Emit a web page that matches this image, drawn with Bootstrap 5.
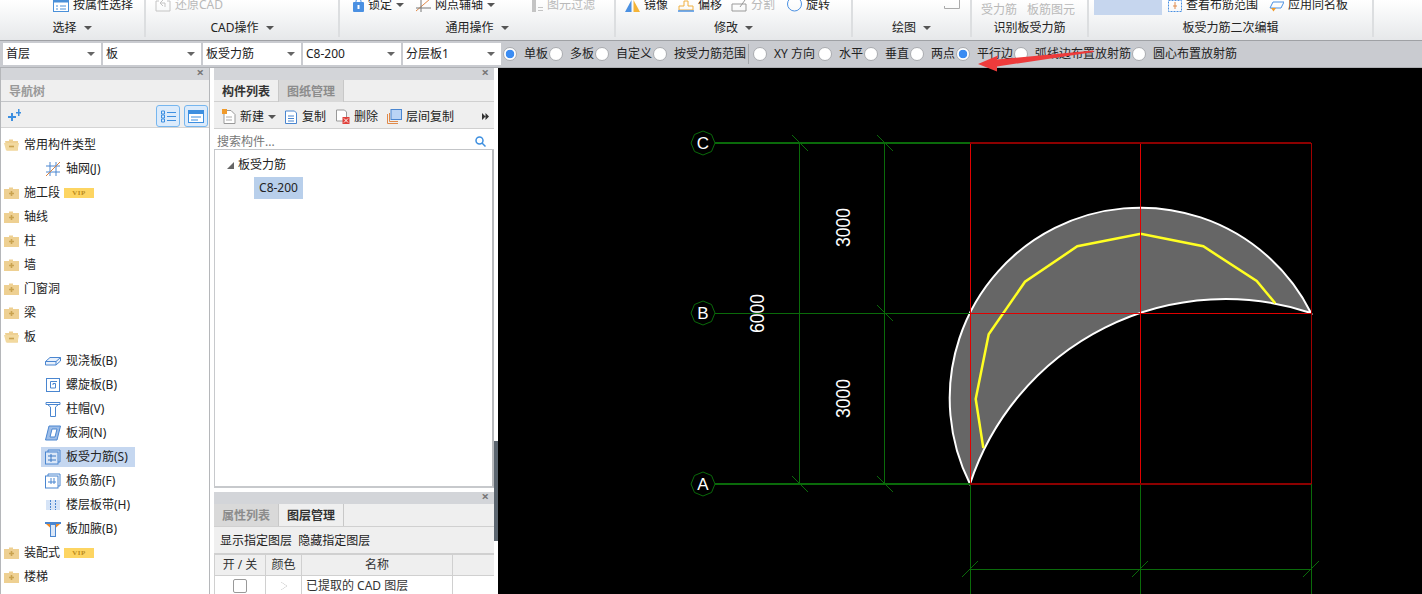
<!DOCTYPE html>
<html lang="zh">
<head>
<meta charset="utf-8">
<title>板受力筋</title>
<link href="https://cdn.jsdelivr.net/npm/bootstrap@5.3.0/dist/css/bootstrap.min.css" rel="stylesheet">
<style>
html,body{height:594px;overflow:hidden}
body{font-family:"Noto Sans","Noto Sans CJK SC",sans-serif;font-size:12px;line-height:18px;color:#222;background:#fff;position:relative}
svg{display:block;flex:none}
.ribbon{height:40px;background:linear-gradient(#fff,#e6e8ea);border-bottom:0}
.rgroup{height:37px;border-right:2px solid #dcdee0;flex:none}
.rtop{height:18px;overflow:hidden;white-space:nowrap}
.ritem{display:flex;align-items:center;gap:4px;margin-top:-4px;height:18px}
.rlabel{height:20px;line-height:20px;text-align:center;color:#222}
.off{color:#b9b9b9}
.caret-s{display:inline-block;width:0;height:0;border-left:4px solid transparent;border-right:4px solid transparent;border-top:4px solid #555;vertical-align:2px}
.g1{width:146px;padding-left:53px}.g2{width:194px;padding-left:9px}.g3{width:276px;padding-left:13px}.g4{width:237px;padding-left:9px}.g5{width:119px}.g6{width:117px}.g7{width:285px}
.optbar{height:28px;background:#c9cbd0;border-top:1px solid #9fa1a5;border-bottom:1px solid #aeb0b4;padding:2px 0 0 3px}
.combo{position:relative;width:98px;height:22px;margin-right:2px;flex:none}
.combo .form-select{height:22px;min-height:0;padding:0 14px 0 3px;border:0;border-radius:0;font-size:12px;line-height:22px;background-image:none;color:#222;font-family:inherit}
.combo::after{content:"";position:absolute;right:6px;top:9px;border-left:4px solid transparent;border-right:4px solid transparent;border-top:4px solid #666}
.optbar .form-check-input{width:14px;height:14px;margin:0 7px 0 0;flex:none;background-color:#fff;border:1px solid #a9abaf;box-shadow:none}
.optbar .form-check-input:checked{background-color:#fff;border-color:#a9abaf;background-image:radial-gradient(circle,#3b8cf2 0 4px,transparent 4.6px)}
.optlab{margin-right:1px;white-space:nowrap;color:#222}
.optlab.wide{margin-right:3px}
.optsep{width:1px;height:20px;background:#a5a7ab;margin:0 4px 0 1px}
.workspace{height:526px}
.lpane{width:210px;flex:none;background:#fff;border-left:1px solid #b5b7ba;border-right:1px solid #b5b7ba}
.mpane{width:280px;flex:none;margin-left:4px;background:#fff}
.pbar{height:12px;background:#d3d5d9;position:relative;flex:none}
.pbar i{position:absolute;right:5px;top:-4px;font-style:normal;font-size:13px;line-height:16px;color:#777;font-weight:700}
.phead{height:22px;line-height:23px;background:#efefef;border-bottom:1px solid #c3c5c8;padding-left:8px;color:#999;font-weight:600;flex:none}
.ltools{height:26px;background:#efefef;border-bottom:1px solid #d4d4d4;padding:3px 1px 0 7px;flex:none}
.vbtn{width:24px;height:22px;border:1px solid #76b6ef;border-radius:3px;background:#dcebfb;margin-left:4px;display:flex;align-items:center;justify-content:center}
.ntree{padding-top:5px;margin:0;flex:1;overflow:hidden}
.ntree li{height:24px;display:flex;align-items:center;padding-left:3px;white-space:nowrap}
.ntree li .fname{margin-left:5px}
.ntree li.kid{padding-left:44px}
.ntree li.kid svg{margin-right:5px}
.ntree li.kid span{padding:1px 0}
.ntree li.sel{position:relative}
.ntree li.sel::before{content:"";position:absolute;left:40px;width:94px;top:2px;height:20px;background:#c5d7f0;z-index:0}
.ntree li.sel>*{position:relative;z-index:1}
.viptag{width:30px;height:10px;margin-left:4px;background:#fdd562;color:#b98a1c;font:700 7px/10px "Liberation Serif",serif;text-align:center;letter-spacing:.5px}
.tabrow{height:22px;background:#efefef;border-bottom:1px solid #d0d0d0;flex:none}
.ptab{width:65px;height:22px;line-height:24px;text-align:center;flex:none;border-right:1px solid #c8c8c8;font-weight:700;color:#333}
.ptab.idle{background:#d9d9d9;color:#8c8c8c;font-weight:600}
.mtools{height:27px;background:#efefef;border-bottom:1px solid #d0d0d0;white-space:nowrap;flex:none;padding-top:3px}
.mtools span{display:block}
.searchbox{height:21px;background:#fff;border-bottom:1px solid #c3c5c8;padding:5px 8px 0 3px;color:#777;flex:none}
.ctree{height:338px;border-bottom:2px solid #c7c9cc;border-left:1px solid #c7c9cc;border-right:2px solid #b8babd;flex:none}
.ctree .rowa{height:25px;padding:5px 0 0 12px;gap:4px}
.ctree .rowb{margin:2px 0 0 39px;width:49px;height:22px;line-height:22px;background:#b8cfeb;text-align:center}
.pgap{height:4px;flex:none}
.layertools{height:27px;line-height:27px;background:#efefef;border-bottom:1px solid #d0d0d0;padding-left:6px;flex:none}
.layertbl{table-layout:fixed;width:280px;margin:0;font-size:12px;--bs-table-bg:transparent}
.layertbl th,.layertbl td{padding:0;text-align:center;font-weight:400;border:1px solid #d0d0d0;height:21px;line-height:20px;color:#333}
.layertbl th{background:#efefef}
.layertbl .cbx{width:14px;height:14px;margin:3px 0 0;border:1px solid #999;border-radius:2px}
.layertbl td.lname{text-align:left;padding-left:4px}
.tri-r{width:0;height:0;display:inline-block;border-left:6px solid #fff;border-top:4px solid transparent;border-bottom:4px solid transparent;filter:drop-shadow(0 0 .6px #666)}
.gutter{width:4px;flex:none;background:#fff}
.gutter div{height:100px;margin-top:373px;background:#5c6670}
.cadwrap{flex:1;background:#000}
.cadtxt{font-family:"Liberation Sans",sans-serif;fill:#fff}
.arrowover{position:absolute;left:970px;top:45px}
</style>
</head>
<body>
<svg width="0" height="0" class="position-absolute">
<defs>
<symbol id="fc" viewBox="0 0 15 12"><path d="M0 2h5V0.5h4V2h6v10H0z" fill="#eed092"/><path d="M5 6.5h5M7.5 4v5" stroke="#c9a24f" stroke-width="1.6"/></symbol>
<symbol id="fo" viewBox="0 0 15 12"><path d="M1 2h4V0.5h4V2h5v9.5H3z" fill="#eed092"/><path d="M0 4h15l-1.5 7.5H2z" fill="#f2d99f"/><path d="M5 7.5h5" stroke="#c9a24f" stroke-width="1.6"/></symbol>
</defs>
</svg>

<div class="ribbon d-flex">
  <div class="rgroup g1">
    <div class="rtop d-flex"><div class="ritem"><svg width="16" height="13" viewBox="0 0 16 13"><rect x=".5" y=".5" width="15" height="12" fill="#fff" stroke="#4a90d9"/><rect x=".5" y=".5" width="15" height="3" fill="#4a90d9"/><path d="M3 7h2M7 7h6M3 10h2M7 10h6" stroke="#4a90d9"/></svg><span>按属性选择</span></div></div>
    <div class="rlabel" style="margin-left:-53px">选择 <span class="caret-s ms-1"></span></div>
  </div>
  <div class="rgroup g2">
    <div class="rtop d-flex"><div class="ritem off"><svg width="16" height="13" viewBox="0 0 16 13" fill="none" stroke="#c4c4c4"><path d="M1 12V2h3M12 2h3v10H1"/><path d="M8 1L5 4l3 3M5 4h5v4"/></svg><span>还原CAD</span></div></div>
    <div class="rlabel" style="margin-left:-9px">CAD操作 <span class="caret-s ms-1"></span></div>
  </div>
  <div class="rgroup g3">
    <div class="rtop d-flex">
      <div class="ritem"><svg width="11" height="13" viewBox="0 0 11 13"><rect y="3" width="11" height="10" rx="1" fill="#4a90e2"/><path d="M3 4V2a2.500 2 0 0 1 5 0v2" fill="none" stroke="#4a90e2"/><rect x="4.500" y="6" width="2" height="4" fill="#fff"/></svg><span>锁定</span><span class="caret-s"></span></div>
      <div class="ritem" style="margin-left:12px"><svg width="15" height="13" viewBox="0 0 15 13" fill="none"><path d="M0 12L14 0" stroke="#e08a4a"/><path d="M5 0v13M0 9h15" stroke="#777"/></svg><span>网点辅轴</span><span class="caret-s"></span></div>
      <div class="ritem off" style="margin-left:37px"><svg width="11" height="13" viewBox="0 0 11 13" fill="#c4c4c4"><rect width="4" height="13"/><path d="M6 8h5v1H6zM6 11h5v1H6z"/></svg><span>图元过滤</span></div>
    </div>
    <div class="rlabel" style="margin-left:-13px">通用操作 <span class="caret-s ms-1"></span></div>
  </div>
  <div class="rgroup g4">
    <div class="rtop d-flex">
      <div class="ritem"><svg width="15" height="13" viewBox="0 0 15 13"><path d="M0 13L6.500 1V13z" fill="#4a90e2"/><path d="M8.500 1L15 13H8.500z" fill="#f5b437"/></svg><span>镜像</span></div>
      <div class="ritem" style="margin-left:10px"><svg width="16" height="13" viewBox="0 0 16 13" fill="none"><path d="M1 11V7h5V2h4v5h5v4z" stroke="#f0b040"/><path d="M0 12h16" stroke="#4a90e2" stroke-width="1.500"/></svg><span>偏移</span></div>
      <div class="ritem off" style="margin-left:9px"><svg width="16" height="13" viewBox="0 0 16 13" fill="none" stroke="#999"><path d="M1 5h14v7H1zM9 8l5-7"/></svg><span>分割</span></div>
      <div class="ritem" style="margin-left:12px"><svg width="15" height="13" viewBox="0 0 15 13" fill="none"><circle cx="7.500" cy="5" r="7" stroke="#4a90e2"/></svg><span>旋转</span></div>
    </div>
    <div class="rlabel" style="margin-left:-9px">修改 <span class="caret-s ms-1"></span></div>
  </div>
  <div class="rgroup g5">
    <div class="rtop position-relative"><svg class="position-absolute" style="left:91px;top:0" width="16" height="9" viewBox="0 0 16 9" fill="none" stroke="#aaa"><path d="M.5 8.500h15M15.500 0v8.500M.5 6v2.500"/></svg></div>
    <div class="rlabel">绘图 <span class="caret-s ms-1"></span></div>
  </div>
  <div class="rgroup g6">
    <div class="rtop d-flex off" style="padding-left:9px;gap:10px;line-height:18px;padding-top:1px"><span>受力筋</span><span>板筋图元</span></div>
    <div class="rlabel">识别板受力筋</div>
  </div>
  <div class="rgroup g7">
    <div class="rtop d-flex">
      <div style="width:68px;height:15px;background:#c6d6ee;margin-left:5px"></div>
      <div class="ritem" style="margin-left:6px"><svg width="14" height="13" viewBox="0 0 14 13" fill="none"><rect x=".5" y="1.500" width="13" height="11" stroke="#4a90e2" stroke-dasharray="2 1"/><path d="M7 3v7M5 7h4" stroke="#e08a4a"/></svg><span>查看布筋范围</span></div>
      <div class="ritem" style="margin-left:11px"><svg width="15" height="13" viewBox="0 0 15 13" fill="none"><path d="M4 3h11l-3 6H1z" stroke="#4a90e2"/><path d="M2 9h5l-2.500 3.500z" fill="#f09a2a"/></svg><span>应用同名板</span></div>
    </div>
    <div class="rlabel">板受力筋二次编辑</div>
  </div>
</div>

<div class="optbar d-flex">
  <div class="combo"><select class="form-select"><option>首层</option></select></div>
  <div class="combo"><select class="form-select"><option>板</option></select></div>
  <div class="combo"><select class="form-select"><option>板受力筋</option></select></div>
  <div class="combo"><select class="form-select"><option>C8-200</option></select></div>
  <div class="combo me-0"><select class="form-select"><option>分层板1</option></select></div>
  <div class="d-flex align-items-center" style="height:22px;padding-left:2px">
    <input class="form-check-input" type="radio" name="a" checked><span class="optlab">单板</span>
    <input class="form-check-input" type="radio" name="a"><span class="optlab">多板</span>
    <input class="form-check-input" type="radio" name="a"><span class="optlab">自定义</span>
    <input class="form-check-input" type="radio" name="a"><span class="optlab">按受力筋范围</span>
    <span class="optsep"></span>
    <input class="form-check-input" type="radio" name="b"><span class="optlab wide">XY 方向</span>
    <input class="form-check-input" type="radio" name="b"><span class="optlab">水平</span>
    <input class="form-check-input" type="radio" name="b"><span class="optlab">垂直</span>
    <input class="form-check-input" type="radio" name="b"><span class="optlab">两点</span>
    <input class="form-check-input" type="radio" name="b" checked><span class="optlab">平行边</span>
    <input class="form-check-input" type="radio" name="b"><span class="optlab">弧线边布置放射筋</span>
    <input class="form-check-input" type="radio" name="b"><span class="optlab">圆心布置放射筋</span>
  </div>
</div>

<div class="workspace d-flex">
  <aside class="lpane d-flex flex-column">
    <div class="pbar"><i>×</i></div>
    <div class="phead">导航树</div>
    <div class="ltools d-flex">
      <svg class="mt-1" width="13" height="12" viewBox="0 0 13 12" fill="#3d8fe0"><path d="M0 7h3V4h2v3h3v2H5v3H3V9H0zM8 3h2V0h1.500v3H13v1.500h-1.500V7H10V4.500H8z"/></svg>
      <div class="vbtn" style="margin-left:135px"><svg width="15" height="13" viewBox="0 0 15 13" fill="none" stroke="#3d8fe0"><path d="M.5 1h3v3h-3zM.5 5h3v3h-3zM.5 9h3v3h-3zM6 2.500h9M6 6.500h9M6 10.500h9"/></svg></div>
      <div class="vbtn"><svg width="16" height="13" viewBox="0 0 16 13"><rect x=".5" y=".5" width="15" height="12" fill="#fff" stroke="#3d8fe0"/><rect x=".5" y=".5" width="15" height="3.500" fill="#3d8fe0"/><path d="M3 7h10M3 10h7" stroke="#3d8fe0"/></svg></div>
    </div>
    <ul class="ntree list-unstyled">
      <li><svg width="15" height="12"><use href="#fo"/></svg><span class="fname">常用构件类型</span></li>
      <li class="kid"><svg width="16" height="16" viewBox="0 0 16 16" fill="none"><path d="M5 1v14M11 1v14M1 5h14M1 11h14" stroke="#4a86d0"/><path d="M1 15L15 1" stroke="#d9813f"/></svg><span>轴网(J)</span></li>
      <li><svg width="15" height="12"><use href="#fc"/></svg><span class="fname">施工段</span><span class="viptag">VIP</span></li>
      <li><svg width="15" height="12"><use href="#fc"/></svg><span class="fname">轴线</span></li>
      <li><svg width="15" height="12"><use href="#fc"/></svg><span class="fname">柱</span></li>
      <li><svg width="15" height="12"><use href="#fc"/></svg><span class="fname">墙</span></li>
      <li><svg width="15" height="12"><use href="#fc"/></svg><span class="fname">门窗洞</span></li>
      <li><svg width="15" height="12"><use href="#fc"/></svg><span class="fname">梁</span></li>
      <li><svg width="15" height="12"><use href="#fo"/></svg><span class="fname">板</span></li>
      <li class="kid"><svg width="16" height="16" viewBox="0 0 16 16" fill="none" stroke="#4a86d0"><path d="M.5 8.500L5 4.500h10.500v3.500L11 12H.5zM.5 8.500H11v3.500M11 8.500l4.500-4" fill="#e8f0fb"/></svg><span>现浇板(B)</span></li>
      <li class="kid"><svg width="16" height="16" viewBox="0 0 16 16" fill="none" stroke="#4a86d0"><rect x="1.500" y="1.500" width="13" height="13"/><path d="M8 8v-1.500h2.500v4.500H5.500V4.500H12"/></svg><span>螺旋板(B)</span></li>
      <li class="kid"><svg width="16" height="16" viewBox="0 0 16 16" fill="none" stroke="#4a86d0"><path d="M1 1.500h14v2H1zM2.500 3.500L5.500 6v9.500h5V6l3-2.500"/></svg><span>柱帽(V)</span></li>
      <li class="kid"><svg width="16" height="16" viewBox="0 0 16 16"><path d="M4 1h11.500L12 15H.5z" fill="#9dbde8" stroke="#4a86d0"/><path d="M7 4h5l-2 8H5z" fill="#fff" stroke="#4a86d0"/></svg><span>板洞(N)</span></li>
      <li class="kid sel"><svg width="16" height="16" viewBox="0 0 16 16" fill="none" stroke="#4a86d0"><path d="M3 3V1h12v12h-2"/><rect x=".5" y="3" width="12.500" height="12" fill="#dbe7f7"/><path d="M3 7h8M3 11h8M6 5v8" stroke="#3b78c4"/></svg><span>板受力筋(S)</span></li>
      <li class="kid"><svg width="16" height="16" viewBox="0 0 16 16" fill="none" stroke="#4a86d0"><path d="M3 3V1h12v12h-2"/><rect x=".5" y="3" width="12.500" height="12" fill="#fff"/><path d="M3 9h8M6 5v6M9 5v6"/></svg><span>板负筋(F)</span></li>
      <li class="kid"><svg width="16" height="16" viewBox="0 0 16 16"><rect x="1" y="3" width="14" height="10" fill="#d6e4f7"/><path d="M5.500 3v10M10.500 3v10" stroke="#4a86d0" stroke-dasharray="2 1"/></svg><span>楼层板带(H)</span></li>
      <li class="kid"><svg width="16" height="16" viewBox="0 0 16 16"><path d="M0 1h16v2H0z" fill="#4a86d0"/><path d="M1 3h4.500v4zM15 3h-4.500v4z" fill="#f08a24"/><rect x="5.500" y="3.500" width="5" height="12" fill="#dbe7f7" stroke="#4a86d0"/></svg><span>板加腋(B)</span></li>
      <li><svg width="15" height="12"><use href="#fc"/></svg><span class="fname">装配式</span><span class="viptag">VIP</span></li>
      <li><svg width="15" height="12"><use href="#fc"/></svg><span class="fname">楼梯</span></li>
    </ul>
  </aside>

  <section class="mpane d-flex flex-column">
    <div class="pbar"><i>×</i></div>
    <div class="tabrow d-flex"><div class="ptab">构件列表</div><div class="ptab idle">图纸管理</div></div>
    <div class="mtools d-flex align-items-center">
      <svg class="ms-2" width="14" height="15" viewBox="0 0 14 15"><path d="M2 1.500h7l4 4v9H2z" fill="#fff" stroke="#999"/><path d="M4 8h6M4 11h6" stroke="#aaa"/><rect width="5" height="5" fill="#f09a2a"/></svg>
      <span class="ms-1">新建</span><span class="caret-s" style="margin-left:4px"></span>
      <svg style="margin-left:9px" width="12" height="15" viewBox="0 0 12 15"><path d="M.5 2h9l2 2v10.500H.5z" fill="#fff" stroke="#4a86d0"/><path d="M3 7h6M3 9.500h6M3 12h6" stroke="#4a86d0"/></svg>
      <span style="margin-left:5px">复制</span>
      <svg style="margin-left:10px" width="14" height="15" viewBox="0 0 14 15"><path d="M.5 1h8l2 2v9H.5z" fill="#fff" stroke="#999"/><rect x="6.500" y="8" width="7" height="7" fill="#e0403a"/><path d="M8 9.500l4 4M12 9.500l-4 4" stroke="#fff"/></svg>
      <span style="margin-left:4px">删除</span>
      <svg style="margin-left:9px" width="15" height="15" viewBox="0 0 15 15"><path d="M.5 5v9.500H11" fill="none" stroke="#e08a4a"/><path d="M2.500 4v8.500H11" fill="none" stroke="#e08a4a"/><rect x="4" y=".5" width="10.500" height="10" fill="#b9d4f5" stroke="#4a86d0"/></svg>
      <span style="margin-left:4px">层间复制</span>
      <svg class="ms-auto" style="margin-right:5px" width="7" height="7" viewBox="0 0 7 7" fill="#333"><path d="M0 0l3.500 3.500L0 7zM3.500 0L7 3.500 3.500 7z"/></svg>
    </div>
    <div class="searchbox d-flex align-items-center justify-content-between"><span>搜索构件...</span><svg width="11" height="11" viewBox="0 0 11 11" fill="none" stroke="#3d8fe0" stroke-width="1.500"><circle cx="4.500" cy="4.500" r="3.500"/><path d="M7 7l3.500 3.500"/></svg></div>
    <div class="ctree">
      <div class="rowa d-flex align-items-center"><svg width="7" height="7" viewBox="0 0 7 7"><path d="M0 7L7 7L7 0z" fill="#666"/></svg><span>板受力筋</span></div>
      <div class="rowb">C8-200</div>
    </div>
    <div class="pgap"></div>
    <div class="pbar"><i>×</i></div>
    <div class="tabrow d-flex" style="height:23px"><div class="ptab idle">属性列表</div><div class="ptab">图层管理</div></div>
    <div class="layertools">显示指定图层&nbsp;&nbsp;隐藏指定图层</div>
    <table class="table layertbl">
      <colgroup><col style="width:51px"><col style="width:36px"><col style="width:151px"><col style="width:42px"></colgroup>
      <thead><tr><th>开 / 关</th><th>颜色</th><th>名称</th><th></th></tr></thead>
      <tbody><tr><td><div class="cbx mx-auto"></div></td><td><span class="tri-r"></span></td><td class="lname">已提取的 CAD 图层</td><td></td></tr></tbody>
    </table>
  </section>

  <div class="gutter"><div></div></div>

  <div class="cadwrap">
    <svg width="924" height="526" viewBox="498 68 924 526" fill="none">
      <path d="M970 484A190.500 190.500 0 1 1 1311 313A269 269 0 0 0 970 484Z" fill="#666" stroke="#fff" stroke-width="2"/>
      <polyline points="983.300,448 975.700,399 988.700,334.300 1025,281.700 1077.300,246.300 1140.700,233.700 1203.300,246.300 1256.700,281 1275.300,303.300" stroke="#ffff22" stroke-width="2.500"/>
      <g stroke="#0a6a0a">
        <path d="M715 143H970" stroke-width="2"/>
        <path d="M715 313.500H970"/>
        <path d="M715 484H970" stroke-width="2"/>
        <path d="M799.500 143V484M884.500 143V484"/>
        <path d="M970.500 484V594M1140.500 484V594M1311.500 484V594"/>
        <path d="M970 569.500H1311"/>
        <path d="M792 135L808 151M877 135L893 151M877 305L893 321M792 476L808 492M877 476L893 492"/>
        <path d="M962 577L978 561M1132 577L1148 561M1303 577L1319 561"/>
        <polygon points="715,143 711.500,134.500 703,131 694.500,134.500 691,143 694.500,151.500 703,155 711.500,151.500"/>
        <polygon points="715,313 711.500,304.500 703,301 694.500,304.500 691,313 694.500,321.500 703,325 711.500,321.500"/>
        <polygon points="715,484 711.500,475.500 703,472 694.500,475.500 691,484 694.500,492.500 703,496 711.500,492.500"/>
      </g>
      <path d="M970.500 143V484M1140.500 143V484M970 313.500H1311" stroke="#e00000"/>
      <path d="M1311.500 143V484" stroke="#a00000"/>
      <path d="M970 143H1311M970 484H1311" stroke="#8c0000" stroke-width="2"/>
      <text class="cadtxt" x="703" y="149" font-size="17" text-anchor="middle">C</text>
      <text class="cadtxt" x="703" y="319" font-size="17" text-anchor="middle">B</text>
      <text class="cadtxt" x="703" y="490" font-size="17" text-anchor="middle">A</text>
      <text class="cadtxt" transform="translate(850 247) rotate(-90)" font-size="20" textLength="39" lengthAdjust="spacingAndGlyphs">3000</text>
      <text class="cadtxt" transform="translate(850 418) rotate(-90)" font-size="20" textLength="39" lengthAdjust="spacingAndGlyphs">3000</text>
      <text class="cadtxt" transform="translate(764 333) rotate(-90)" font-size="20" textLength="39" lengthAdjust="spacingAndGlyphs">6000</text>
    </svg>
  </div>
</div>

<svg class="arrowover" width="130" height="30" viewBox="970 45 130 30"><path d="M978 64L998 55.500L997 59.500L1093 50.500L1094 52L997 66.500L997 71.500Z" fill="#ee3b3b"/></svg>
<script src="https://cdn.jsdelivr.net/npm/bootstrap@5.3.0/dist/js/bootstrap.bundle.min.js"></script>
</body>
</html>
